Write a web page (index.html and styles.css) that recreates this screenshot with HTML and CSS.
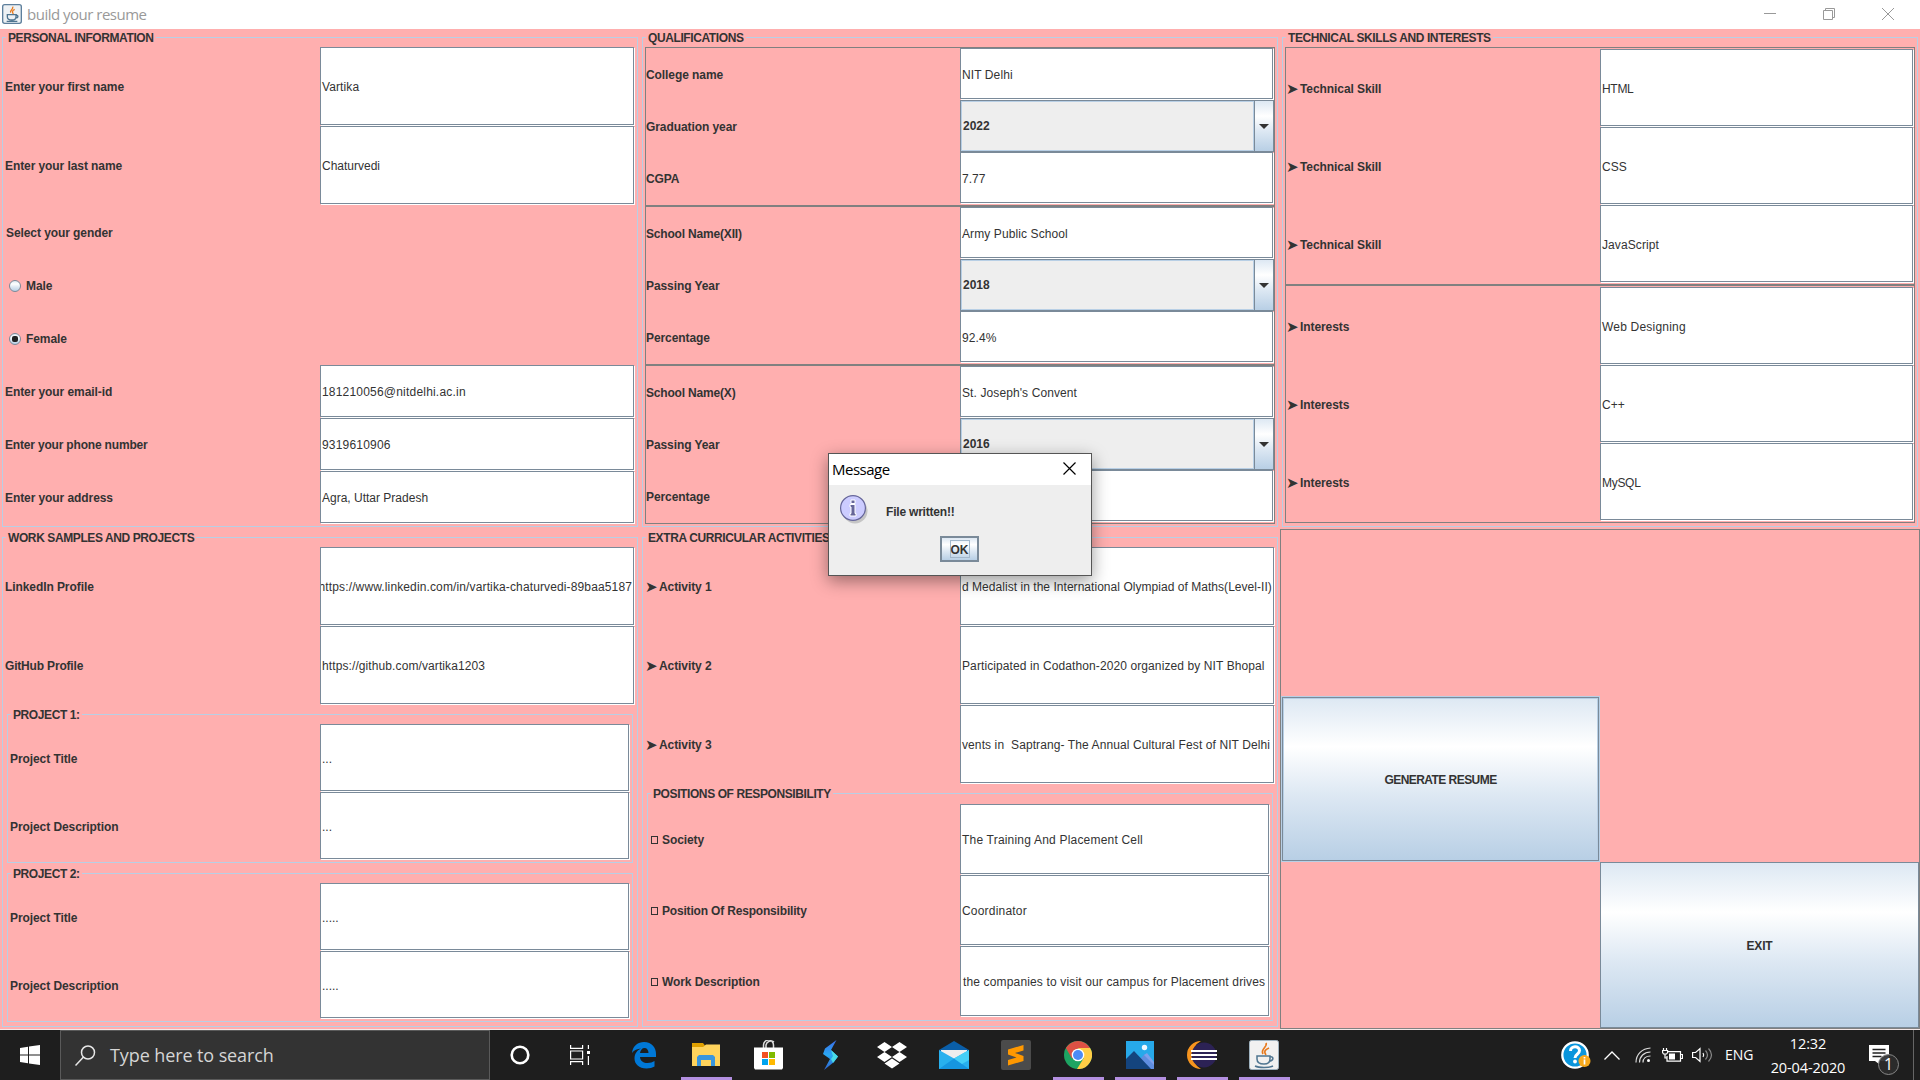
FILE: index.html
```html
<!DOCTYPE html>
<html lang="en">
<head>
<meta charset="utf-8">
<title>build your resume</title>
<link rel="stylesheet" href="styles.css">
</head>
<body>
<div class="screen">
  <header class="titlebar">
    <svg class="app-icon" width="20" height="20" viewBox="0 0 30 30"><rect x="1" y="1" width="28" height="28" rx="3" fill="#edf1f4" stroke="#5d7f9c" stroke-width="2"/><path d="M16 4c2 4-5 5-3 9M19 8c-4 2-4 4-2 7" fill="none" stroke="#e87a1d" stroke-width="2"/><path d="M8 16h13v3c0 4-2 5-6 5s-7-1-7-5zM21 17c4-1 4 4-1 4M7 26h16" fill="none" stroke="#4f7590" stroke-width="2"/></svg>
    <span class="win-title">build your resume</span>
    <div class="win-controls">
      <svg width="12" height="12" viewBox="0 0 12 12"><path d="M0 5.5h12"/></svg>
      <svg width="12" height="12" viewBox="0 0 12 12"><path d="M.5 2.5h9v9h-9zM2.500 2.500v-2h9v9h-2"/></svg>
      <svg width="12" height="12" viewBox="0 0 12 12"><path d="M0 0l12 12M12 0L0 12"/></svg>
    </div>
  </header>

  <main class="form">
    <section class="panel">
      <h2 class="legend"><span>PERSONAL INFORMATION</span></h2>
      <div class="box three">
        <div class="rows two-rows">
          <label>Enter your first name</label><div class="field">Vartika</div>
          <label>Enter your last name</label><div class="field plain">Chaturvedi</div>
        </div>
        <div class="rows gender">
          <label>Select your gender</label>
          <label class="choice"><i class="radio"></i>Male</label>
          <label class="choice"><i class="radio on"></i>Female</label>
        </div>
        <div class="rows">
          <label>Enter your email-id</label><div class="field wide">181210056@nitdelhi.ac.in</div>
          <label class="tight">Enter your phone number</label><div class="field wide">9319610906</div>
          <label>Enter your address</label><div class="field plain">Agra, Uttar Pradesh</div>
        </div>
      </div>
    </section>

    <section class="panel">
      <h2 class="legend"><span>QUALIFICATIONS</span></h2>
      <div class="box three">
        <div class="rows lined">
          <label>College name</label><div class="field">NIT Delhi</div>
          <label>Graduation year</label><div class="combo"><b>2022</b><i class="drop"></i></div>
          <label>CGPA</label><div class="field plain">7.77</div>
        </div>
        <div class="rows lined">
          <label class="tight">School Name(XII)</label><div class="field">Army Public School</div>
          <label>Passing Year</label><div class="combo"><b>2018</b><i class="drop"></i></div>
          <label>Percentage</label><div class="field">92.4%</div>
        </div>
        <div class="rows lined">
          <label class="tight">School Name(X)</label><div class="field">St. Joseph's Convent</div>
          <label>Passing Year</label><div class="combo"><b>2016</b><i class="drop"></i></div>
          <label>Percentage</label><div class="field"></div>
        </div>
      </div>
    </section>

    <section class="panel">
      <h2 class="legend"><span>TECHNICAL SKILLS AND INTERESTS</span></h2>
      <div class="box halves">
        <div class="rows lined tall">
          <label><i class="arrow">➤</i>Technical Skill</label><div class="field narrow-text">HTML</div>
          <label><i class="arrow">➤</i>Technical Skill</label><div class="field plain">CSS</div>
          <label><i class="arrow">➤</i>Technical Skill</label><div class="field">JavaScript</div>
        </div>
        <div class="rows lined tall">
          <label><i class="arrow">➤</i>Interests</label><div class="field wide">Web Designing</div>
          <label><i class="arrow">➤</i>Interests</label><div class="field plain">C++</div>
          <label><i class="arrow">➤</i>Interests</label><div class="field narrow-text">MySQL</div>
        </div>
      </div>
    </section>

    <section class="panel">
      <h2 class="legend"><span>WORK SAMPLES AND PROJECTS</span></h2>
      <div class="box three">
        <div class="rows two-rows">
          <label>LinkedIn Profile</label><div class="field end"><span>https://www.linkedin.com/in/vartika-chaturvedi-89baa5187</span></div>
          <label class="tight">GitHub Profile</label><div class="field">https://github.com/vartika1203</div>
        </div>
        <div class="panel">
          <h3 class="legend"><span>PROJECT 1:</span></h3>
          <div class="box"><div class="rows project">
            <label>Project Title</label><div class="field plain">...</div>
            <label>Project Description</label><div class="field plain">...</div>
          </div></div>
        </div>
        <div class="panel">
          <h3 class="legend"><span>PROJECT 2:</span></h3>
          <div class="box"><div class="rows project">
            <label>Project Title</label><div class="field plain">.....</div>
            <label>Project Description</label><div class="field plain">.....</div>
          </div></div>
        </div>
      </div>
    </section>

    <section class="panel">
      <h2 class="legend"><span>EXTRA CURRICULAR ACTIVITIES</span></h2>
      <div class="box halves">
        <div class="rows activities">
          <label><i class="arrow">➤</i>Activity 1</label><div class="field close">d Medalist in the International Olympiad of Maths(Level-II)</div>
          <label><i class="arrow">➤</i>Activity 2</label><div class="field">Participated in Codathon-2020 organized by NIT Bhopal</div>
          <label><i class="arrow">➤</i>Activity 3</label><div class="field">vents in  Saptrang- The Annual Cultural Fest of NIT Delhi</div>
        </div>
        <div class="panel">
          <h3 class="legend"><span>POSITIONS OF RESPONSIBILITY</span></h3>
          <div class="box"><div class="rows positions">
            <label><i class="glyph"></i>Society</label><div class="field wide">The Training And Placement Cell</div>
            <label class="tight"><i class="glyph"></i>Position Of Responsibility</label><div class="field wide">Coordinator</div>
            <label><i class="glyph"></i>Work Description</label><div class="field late">the companies to visit our campus for Placement drives</div>
          </div></div>
        </div>
      </div>
    </section>

    <section class="actions">
      <button class="metal generate">GENERATE RESUME</button>
      <button class="metal exit">EXIT</button>
    </section>
  </main>

  <footer class="taskbar">
    <div class="start"><svg width="20" height="20" viewBox="0 0 20 20" fill="#fff"><path d="M0 3l8-1.200v7.700H0zM9 1.600L20 0v9.500H9zM0 10.500h8v7.700L0 17zM9 10.500h11V20L9 18.400z"/></svg></div>
    <div class="search">
      <svg width="21" height="21" viewBox="0 0 21 21" fill="none" stroke="#e8e8e8" stroke-width="1.500"><circle cx="13" cy="7.500" r="6.500"/><path d="M8.500 12L.5 20.500"/></svg>
      <span>Type here to search</span>
    </div>
    <div class="apps">
      <div class="app narrow"><svg width="20" height="20" viewBox="0 0 20 20"><circle cx="10" cy="10" r="8.300" fill="none" stroke="#fff" stroke-width="2.600"/></svg></div>
      <div class="app taskview"><svg width="20" height="20" viewBox="0 0 20 20" fill="none" stroke="#fff" stroke-width="1.200"><path d="M.6 0v3.400h12V0M.6 20v-3.400h12V20M.6 6h12v8H.6zM18.400 0v4M18.400 11v9"/><path d="M17 6h3v3h-3z" fill="#fff" stroke="none"/></svg></div>
      <div class="app"><svg width="26" height="28" viewBox="0 0 26 28"><path fill="#0078d7" d="M1 12C2 4.500 7 1 13 1c8 0 12 6 12 12v3H9c.3 4 3.500 6 7.500 6 3 0 5-.8 7-2v5.500c-2 1.300-5 2-8 2C8 27.500 3.500 23 3.500 17.500c0-5 3-8.500 6.500-10C6.500 8 3 9 1 12zM9 12h8.500c0-3-1.500-5-4-5S9.500 9 9 12z"/></svg></div>
      <div class="app run"><svg width="28" height="24" viewBox="0 0 28 24"><path fill="#e0a000" d="M0 0h11l2 2.500-2 2.500H0z"/><path fill="#ffd35c" d="M0 4h11l3-2.500h14V23H0z"/><path fill="#3a96dd" d="M5 23V14l2-2h14l2 2v9h-4v-6H9v6z"/></svg></div>
      <div class="app"><svg width="29" height="30" viewBox="0 0 29 30"><path d="M9.500 9V5a5 5 0 0110 0v4M12 9V5a5 5 0 018-3" fill="none" stroke="#ddd" stroke-width="1.500"/><path fill="#fff" d="M0 7.500h29V28l-1 1.500H1L0 28z"/><path fill="#f25022" d="M8 12h6v6H8z"/><path fill="#7fba00" d="M15 12h6v6h-6z"/><path fill="#00a4ef" d="M8 19h6v6H8z"/><path fill="#ffb900" d="M15 19h6v6h-6z"/></svg></div>
      <div class="app"><svg width="17" height="30" viewBox="0 0 17 30"><defs><linearGradient id="s" x2="0" y2="1"><stop stop-color="#3b6be8"/><stop offset=".5" stop-color="#2aa8f2"/><stop offset="1" stop-color="#2f63d0"/></linearGradient></defs><path fill="url(#s)" d="M14.500 0L3 8.500 1 14l7 5-6 11 10-8 4-5.500L9 10z"/><path fill="#49dbe6" d="M9 10l7 6.500L11 23l-2-4 2-3z"/></svg></div>
      <div class="app"><svg width="30" height="27" viewBox="0 0 30 27" fill="#fff"><path d="M7.500 0L15 5 7.500 10 0 5zM22.500 0L30 5l-7.500 5L15 5zM7.500 10l7.500 5-7.500 5L0 15zM22.500 10l7.500 5-7.500 5-7.500-5zM15 16.500l7.500 5L15 26.500l-7.500-5z"/></svg></div>
      <div class="app"><svg width="30" height="28" viewBox="0 0 30 28"><path fill="#0a5ea8" d="M0 9L15 0l15 9v5H0z"/><path fill="#eee" d="M2 9h26v6l-13 7L2 15z"/><path fill="#28b0ee" d="M0 9l15 8.500L30 9v19H0z"/><path fill="#1696e0" d="M0 28l15-10.500L30 28z"/><path fill="#45cff7" d="M15 17.500L30 9v10l-7 4z"/></svg></div>
      <div class="app"><svg width="30" height="30" viewBox="0 0 30 30"><rect width="30" height="30" rx="2" fill="#4b4b4b"/><path fill="#ff9800" d="M7 9.500L22.500 5v5.500L14 13l8.500 3v5L7 25.500V20l8.500-2.500L7 14.500z"/></svg></div>
      <div class="app run"><svg width="28" height="28" viewBox="0 0 28 28"><circle cx="14" cy="14" r="14" fill="#1da462"/><path fill="#ffcd46" d="M14 7h12.100A14 14 0 0113 28l6.500-10.500z"/><path fill="#dd5144" d="M14 14L7.900 17.500 1.900 7A14 14 0 0126.100 7H14z"/><circle cx="14" cy="14" r="6.300" fill="#fff"/><circle cx="14" cy="14" r="5" fill="#4c8bf5"/></svg></div>
      <div class="app run"><svg width="28" height="28" viewBox="0 0 28 28"><path fill="#27a9ea" d="M0 0h28v28H0z"/><path fill="#5f8ee0" d="M14 18l5-5 9 9v6H14z"/><path fill="#7ea0ec" d="M18 14l3-2 7 9v3z"/><path fill="#14447e" d="M0 18L8 10l17 18H0z"/><circle cx="18.500" cy="6.500" r="2.700" fill="#f0f8ff"/></svg></div>
      <div class="app run"><svg width="30" height="28" viewBox="0 0 30 28"><path fill="#f7941e" d="M14 0a14 14 0 000 28A16 16 0 0114 0z"/><circle cx="17" cy="14" r="12.500" fill="#2c2255"/><path stroke="#fff" stroke-width="2" d="M4 10h26M4 14h26M4 18h26"/></svg></div>
      <div class="app run"><svg width="30" height="30" viewBox="0 0 30 30"><rect x=".5" y=".5" width="29" height="29" rx="2" fill="#f1f1f1" stroke="#9fb2bf"/><path d="M17 3c2 4-6 6-3 11M20 8c-5 2-5 4-3 7" fill="none" stroke="#e87a1d" stroke-width="1.700"/><path d="M8 16h13v3c0 4-2 5-6 5s-7-1-7-5zM21 17c4-1 4 4-1 4M6 26c4 2 14 2 18 0" fill="none" stroke="#4f7590" stroke-width="1.500"/></svg></div>
    </div>
    <div class="tray">
      <div class="help"><svg width="30" height="28" viewBox="0 0 30 28"><circle cx="14" cy="14" r="12.700" fill="#0a95dc" stroke="#fff" stroke-width="2.300"/><path d="M9.500 10c0-5.500 9-5.500 9-.5 0 4-4.500 3.500-4.500 7.500" fill="none" stroke="#fff" stroke-width="3"/><circle cx="14" cy="20.500" r="1.900" fill="#fff"/><circle cx="23.500" cy="20" r="6" fill="#f8a91c"/><path d="M23.500 18.500v5M23.500 16v1.500" stroke="#fff" stroke-width="1.700"/></svg></div>
      <div class="chev"><svg width="16" height="9" viewBox="0 0 16 9" fill="none" stroke="#fff" stroke-width="1.300"><path d="M.5 8.500L8 1l7.500 7.500"/></svg></div>
      <div class="wifi"><svg width="16" height="16" viewBox="0 0 16 16" fill="none" stroke="#ddd" stroke-width="1.200"><path d="M1 15.500C1 7.500 7 1.500 15.500 1M4.500 15.500C4.500 9.500 9 5 15.500 5M8 15.500C8 11.500 11 9 15.500 9"/><circle cx="13.500" cy="13.500" r="1.500" fill="#fff" stroke="none"/></svg></div>
      <div class="battery"><svg width="21" height="15" viewBox="0 0 21 15" fill="none" stroke="#fff" stroke-width="1.200"><path d="M5 3.600h13.500v9.500H5V8M18.500 6.500h2v4h-2M1.500 0v2M4.500 0v2M.6 2.500h5v2L4.500 6h-3L.6 4.500zM3 6v4h2"/><path fill="#fff" stroke="none" d="M7 5.500h6v6H7z"/></svg></div>
      <div class="sound"><svg width="21" height="16" viewBox="0 0 21 16" fill="none" stroke="#fff" stroke-width="1.200"><path d="M.6 5.500h3L8 1.500v13L3.600 10.500h-3z"/><path d="M11 6q1.500 2 0 4"/><path d="M13.500 3.500q4 4.500 0 9M16.500 1.500q6 6.500 0 13" stroke="#888"/></svg></div>
      <span class="lang">ENG</span>
      <div class="clock"><span>12:32</span><span>20-04-2020</span></div>
      <div class="notes"><svg width="30" height="32" viewBox="0 0 30 32"><path fill="#fff" d="M0 1h20v16H10v3l-4-3H0z"/><path stroke="#222" stroke-width="1.300" d="M3.500 5.500h13M3.500 9h13M3.500 12.500h9"/><circle cx="19.500" cy="20.500" r="10" fill="#2c2c2c" fill-opacity=".92" stroke="#888"/></svg><b>1</b></div>
    </div>
  </footer>

  <div class="dialog">
    <div class="dialog-head"><span>Message</span><svg width="13" height="13" viewBox="0 0 13 13" fill="none" stroke="#000" stroke-width="1.200"><path d="M.5.5l12 12M12.500.5l-12 12"/></svg></div>
    <div class="dialog-body">
      <div class="note">
        <svg width="32" height="32" viewBox="0 0 32 32"><circle cx="15" cy="16" r="12.500" fill="#777" opacity=".35"/><circle cx="13" cy="13" r="12.400" fill="#ccccff" stroke="#666699" stroke-width="1.200"/><path fill="#666699" stroke="#fff" stroke-width="1" d="M11 5h4v3.500h-4zM10 9.500h5v9h1V21h-6v-2.500h1V12h-1z"/></svg>
        <span>File written!!</span>
      </div>
      <button class="ok"><span>OK</span></button>
    </div>
  </div>
</div>
</body>
</html>
```
FILE: styles.css
```css
* { box-sizing: border-box; }
body { margin: 0; background: #ffafaf; overflow: hidden; }
h2, h3 { margin: 0; font-size: inherit; }
i { font-style: normal; }
svg { display: block; flex: none; }

.screen {
  position: relative;
  width: 1920px; height: 1080px;
  display: grid;
  grid-template-rows: 29px 1000px 51px;
  font: bold 12px/14px "Liberation Sans", Arial, sans-serif;
  color: #333;
  overflow: hidden;
}

/* window title */
.titlebar { display: flex; align-items: center; background: #fff; padding: 0 26px 1px 2px; }
.win-title { flex: 1; margin-left: 5px; font: 15px/20px "Open Sans", sans-serif; letter-spacing: -.5px; color: #999; }
.win-controls { display: flex; gap: 47px; fill: none; stroke: #999; stroke-width: 1; }

/* titled panels */
.form { display: grid; grid-template: 500px 500px / 640px 640px 640px; background: #ffafaf; }
.panel { position: relative; padding: 8px 2px 2px; min-width: 0; }
.legend { position: absolute; left: 6px; top: 2px; background: #ffafaf; padding: 0 2px; line-height: 15px; white-space: nowrap; letter-spacing: -.4px; }
.box { height: 100%; border: 1px solid #b8cfe5; padding: 9px 2px 2px; display: grid; }
.three { grid-template-rows: 159px 159px 159px; }
.halves { grid-template-rows: 238px 238px; }

.rows { display: grid; grid-template-columns: 1fr 1fr; grid-auto-rows: 53px; min-width: 0; }
.two-rows { grid-auto-rows: 79px; }
.gender { grid-template-columns: 1fr; padding-left: 1px; }
.lined { border: 1px solid #808080; grid-auto-rows: 52px; }
.tall { grid-auto-rows: 78px; padding-top: 1px; }
.activities { grid-auto-rows: 79px; }
.project { grid-auto-rows: 68px; }
.positions { grid-auto-rows: 71px; padding-top: 1px; }

label { display: flex; align-items: center; white-space: pre; letter-spacing: -.08px; }
.lined > label, .project > label { padding-top: 2px; }
.tight { letter-spacing: -.18px; }
.arrow { width: 14px; font: 15px/14px "DejaVu Sans", sans-serif; }
.glyph { width: 7px; height: 8px; border: 1px solid #333; margin: 0 4px 0 1px; }
.choice { padding-left: 3px; }
.radio { width: 12px; height: 12px; margin-right: 5px; border: 1px solid #7a8a99; border-radius: 50%; background: linear-gradient(#dde8f3, #fff 30%, #dde8f3 60%, #b8cfe5); display: grid; place-items: center; }
.on::after { content: ""; width: 6px; height: 6px; border-radius: 2px; background: #222; }

.field {
  display: flex; align-items: center;
  margin: 0 1px 1px 0; padding: 2px 0 0 1px;
  border: 1px solid #7a8a99;
  box-shadow: 1px 1px 0 #fff;
  background: #fff;
  font-weight: normal; white-space: pre; overflow: hidden; min-width: 0;
  letter-spacing: .1px;
}
.plain { letter-spacing: 0; }
.close { letter-spacing: .04px; }
.wide { letter-spacing: .2px; }
.narrow-text { letter-spacing: -.3px; }
.end { justify-content: flex-end; padding-right: 1px; letter-spacing: .13px; }
.late { padding-left: 2px; letter-spacing: .15px; }

.combo { display: flex; justify-content: space-between; border: 1px solid #7a8a99; background: #eee; }
.combo b { flex: 1; display: flex; align-items: center; padding-left: 1px; border: 1px solid #b8cfe5; }
.drop { width: 19px; border-left: 1px solid #7a8a99; display: grid; place-items: center; background: linear-gradient(#dde8f3, #fff 30%, #dde8f3 60%, #b8cfe5); }
.drop::after { content: ""; border: 5px solid transparent; border-top-color: #333; border-bottom: 0; }

/* action buttons */
.actions { display: grid; grid-template: repeat(3, 166px) / 319px 319px; border: 1px solid #808080; }
button { font: inherit; color: #333; padding: 0; }
.metal { padding-top: 2px; border: 1px solid #7a8a99; background: linear-gradient(#dde8f3, #fff 30%, #dde8f3 60%, #b8cfe5); }
.generate { grid-area: 2 / 1; margin: 1px; outline: 1px solid #b8cfe5; box-shadow: inset 0 0 0 1px #b8cfe5; letter-spacing: -.55px; }
.exit { grid-area: 3 / 2; letter-spacing: -.2px; }

/* message dialog floats over the form */
.dialog { position: absolute; left: 828px; top: 453px; width: 264px; height: 123px; border: 1px solid #555; background: #eee; box-shadow: 0 5px 16px rgba(0,0,0,.4); display: grid; grid-template-rows: 31px 1fr; }
.dialog-head { display: flex; align-items: center; justify-content: space-between; background: #fff; padding: 0 15px 2px 3px; font: 15px/20px "Open Sans", sans-serif; letter-spacing: -.5px; color: #000; }
.dialog-body { display: flex; flex-direction: column; align-items: center; padding-right: 1px; }
.note { align-self: stretch; display: flex; align-items: flex-start; gap: 14px; height: 51px; padding: 10px 0 0 11px; letter-spacing: -.2px; }
.note span { margin-top: 10px; }
.ok { width: 39px; height: 26px; border: 2px solid #7a8a99; background: linear-gradient(#dde8f3, #fff 30%, #dde8f3 60%, #b8cfe5); display: grid; place-items: center; }
.ok span { border: 1px solid #a3b8cc; padding: 2px 0 0; }

/* taskbar */
.taskbar { display: flex; background: #1e1e1e; border-top: 1px solid #f4e8e8; font: 15px/20px "Open Sans", sans-serif; color: #fff; }
.start { width: 60px; display: grid; place-items: center; }
.search { width: 430px; display: flex; align-items: center; gap: 14px; padding-left: 14px; background: #333; border: 1px solid #5a5a5a; color: #d5d5d5; font-size: 18px; letter-spacing: -.1px; }
.apps { display: flex; }
.app { width: 62px; display: grid; place-items: center; }
.narrow { width: 60px; }
.taskview { width: 63px; padding-right: 3px; }
.run { background: linear-gradient(#b38fe0, #b38fe0) no-repeat center bottom / 51px 3px; }
.tray { flex: 1; display: flex; align-items: center; padding-left: 266px; }
.help { width: 43px; }
.chev { width: 31px; }
.wifi { width: 27px; }
.battery { width: 30px; }
.sound { width: 33px; }
.lang { width: 45px; font-size: 14px; }
.clock { width: 76px; height: 46px; padding-top: 1px; display: flex; flex-direction: column; justify-content: space-between; align-items: center; font-size: 14.500px; letter-spacing: -.1px; }
.clock span:first-child { margin-top: 1px; }
.notes { position: relative; margin-left: 23px; width: 45px; height: 50px; padding-top: 14px; border-right: 1px solid #666; }
.notes b { position: absolute; left: 15px; top: 24px; font-weight: 400; font-size: 16px; }
```
